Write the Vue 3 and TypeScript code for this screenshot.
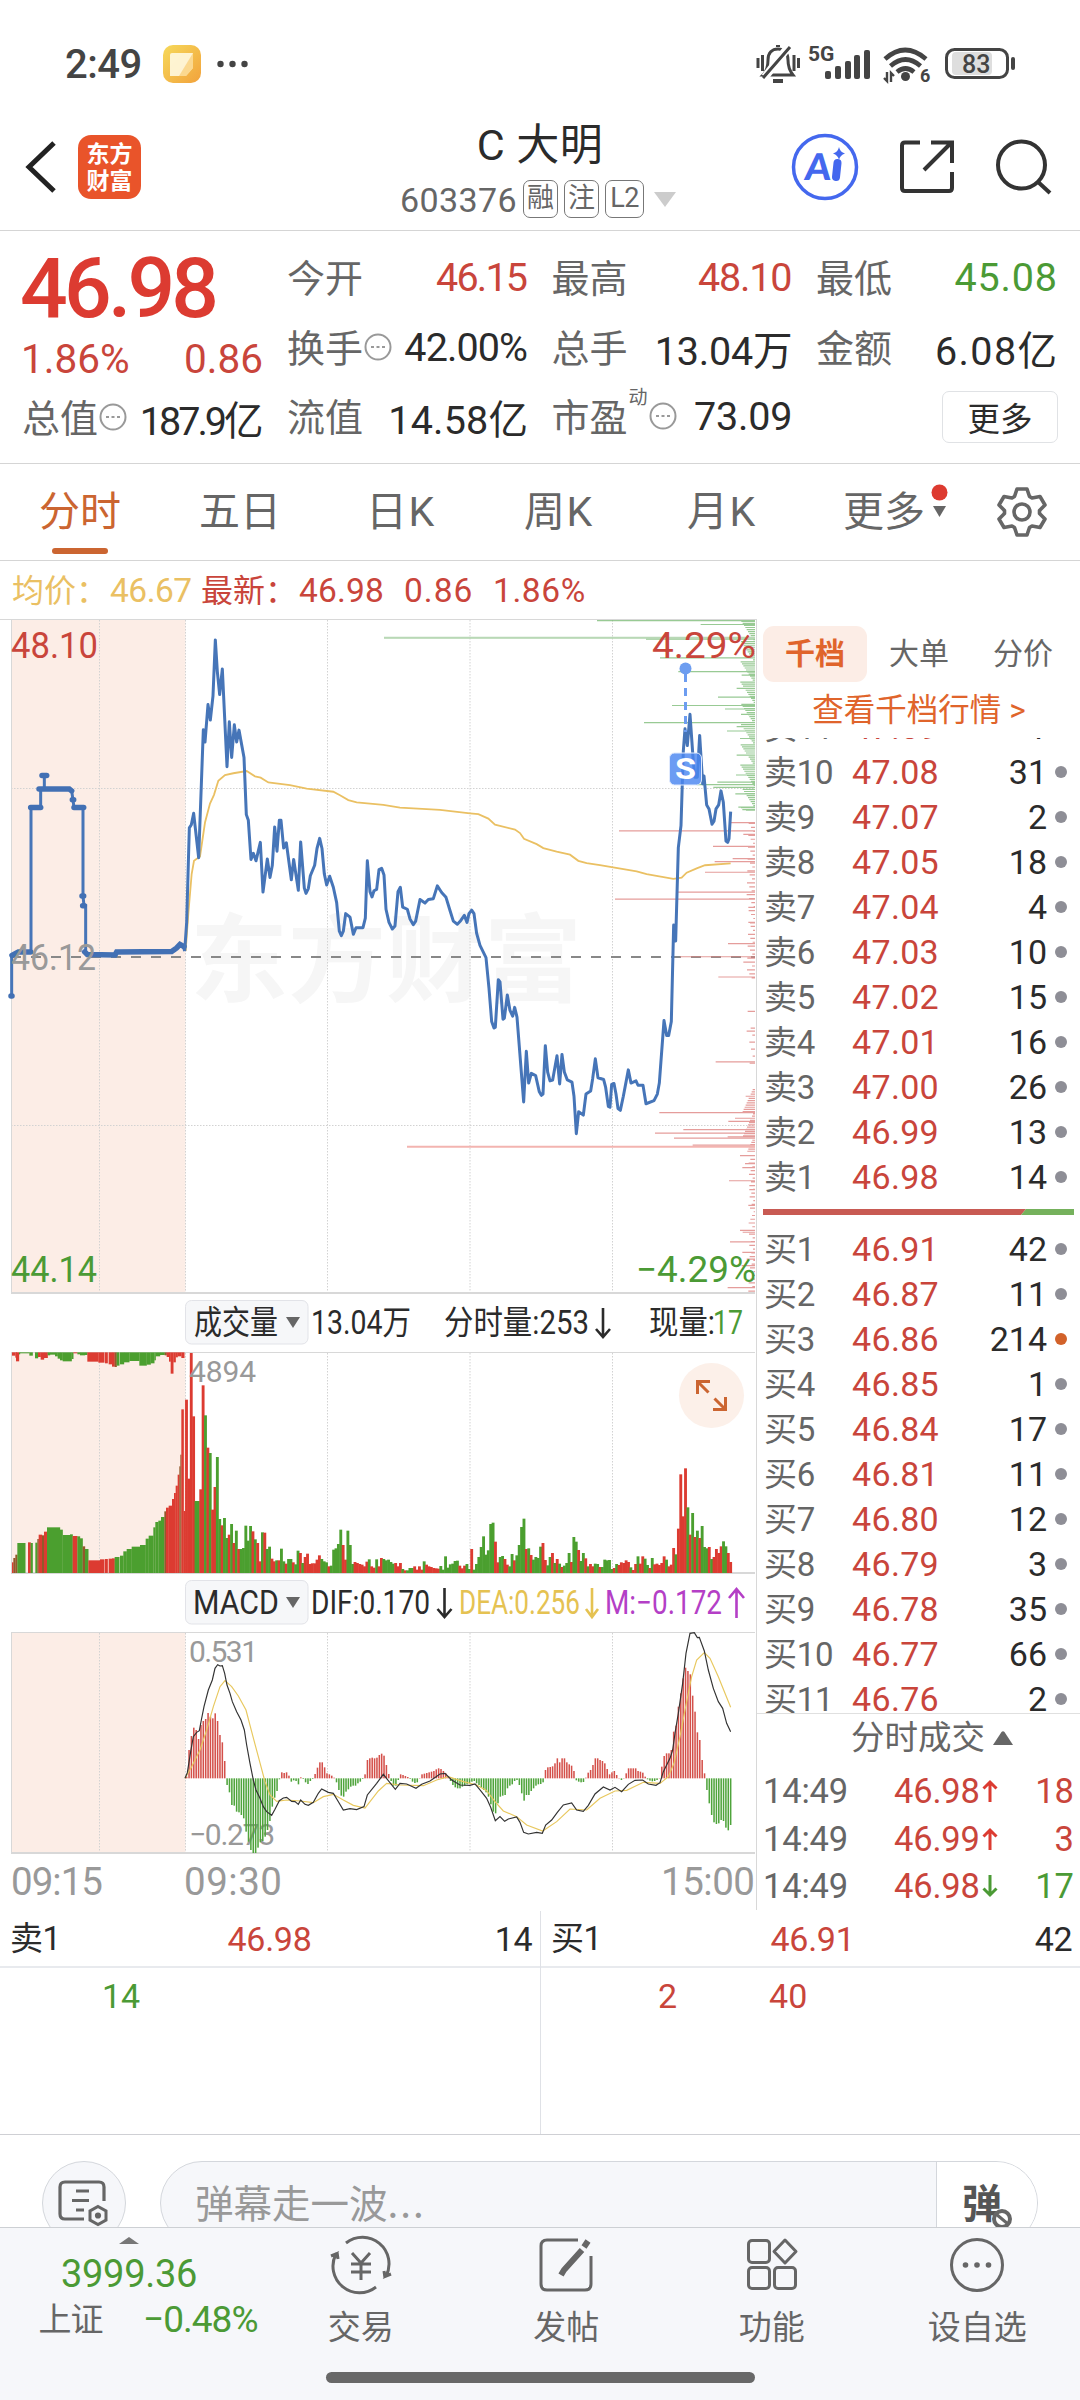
<script setup lang="ts">
type Tone = 'red' | 'green' | 'dark'
interface Stat { label: string; value: string; tone: Tone; ls: number; more?: boolean; sup?: string }
interface Level { name: string; price: string; vol: number; hot?: boolean }
interface Bar { x: number; h: number; up: boolean }

const stats: Stat[] = [
  { label: '今开', value: '46.15', tone: 'red', ls: -1.8 },
  { label: '最高', value: '48.10', tone: 'red', ls: -1.2 },
  { label: '最低', value: '45.08', tone: 'green', ls: 0.8 },
  { label: '换手', value: '42.00%', tone: 'dark', ls: -0.9, more: true },
  { label: '总手', value: '13.04万', tone: 'dark', ls: -0.2 },
  { label: '金额', value: '6.08亿', tone: 'dark', ls: 1.4 },
  { label: '流值', value: '14.58亿', tone: 'dark', ls: 0.2 },
  { label: '市盈', value: '73.09', tone: 'dark', ls: -0.2, more: true, sup: '动' },
]
const tabs = ['五日', '日K', '周K', '月K']

const mk = (side: string, from: number, rows: [string, number][], step: number): Level[] =>
  rows.map(([price, vol], i) => ({ name: side + (from + i * step), price, vol, hot: vol > 200 }))
const asks = mk('卖', 11, [['47.09', 1], ['47.08', 31], ['47.07', 2], ['47.05', 18], ['47.04', 4], ['47.03', 10], ['47.02', 15], ['47.01', 16], ['47.00', 26], ['46.99', 13], ['46.98', 14]], -1)
const bids = mk('买', 1, [['46.91', 42], ['46.87', 11], ['46.86', 214], ['46.85', 1], ['46.84', 17], ['46.81', 11], ['46.80', 12], ['46.79', 3], ['46.78', 35], ['46.77', 66], ['46.76', 2]], 1)
const trades = [
  { price: '46.98', up: true, vol: 18 },
  { price: '46.99', up: true, vol: 3 },
  { price: '46.98', up: false, vol: 17 },
]

/* Chart plots use a fine grid: 3 units per pixel across. */
const join = (a: string, b: string): string =>
  a + ' ' + b.split(' ').map(p => { const [x, y] = p.split(','); return `${+x + 1110},${y}` }).join(' ')

const auction = '35,877 35,790 40,785 50,782 55,777 93,777 93,449 122,449 122,407 133,407 133,377 133,407 208,407 215,411 219,432 222,449 249,449 249,650 252,672 257,672 257,777 262,783 345,784 350,777 515,776 530,768 540,760 550,765 554,775'
const auctionFlat = ['33,877 36,877', '36,785 55,777 92,777', '92,449 122,449', '117,407 208,407 215,411', '126,376 140,376', '217,431 221,431', '222,449 251,449', '246,650 251,650', '248,672 253,672', '254,777 262,783 345,784 350,777 515,776 530,768 540,760 552,765']
const price = join(
  '554,775 560,710 568,495 574,488 581,462 596,563 610,272 615,300 624,215 631,250 639,195 646,68 652,140 659,192 667,134 674,245 681,356 688,254 695,335 703,261 710,300 717,273 732,335 739,465 745,478 753,567 760,553 768,570 781,528 789,641 802,566 810,608 817,580 824,493 831,548 838,478 843,478 851,541 859,529 874,613 881,567 895,637 902,527 913,632 918,644 925,633 931,604 944,580 951,542 959,519 966,542 973,600 980,625 989,605 1000,630 1010,665 1018,730 1024,740 1030,730 1037,690 1050,698 1060,737 1068,722 1089,722 1096,700 1102,570 1110,640',
  '6,652 12,638 20,635 27,590 35,587 42,602 48,680 57,710 67,725 75,718 84,640 91,630 98,675 112,680 120,702 130,715 137,707 150,658 165,666 175,658 190,656 202,627 215,642 228,653 240,683 250,707 262,714 272,706 283,694 291,710 297,690 305,682 312,690 320,735 330,762 348,790 357,860 365,935 372,950 376,948 385,840 390,845 399,930 403,928 412,875 420,910 428,923 434,903 441,925 461,1118 469,1003 476,1075 484,1053 497,1058 508,1095 514,1103 519,1100 526,990 533,1050 540,1070 548,1068 561,1013 569,1077 576,1010 583,1050 592,1068 606,1073 612,1105 619,1190 626,1140 640,1148 648,1100 662,1093 668,1065 676,1020 684,1063 701,1067 707,1085 715,1128 720,1130 725,1078 732,1076 738,1100 744,1133 751,1137 760,1105 775,1045 783,1075 798,1070 804,1080 819,1080 828,1122 852,1115 862,1100 868,1075 882,933 890,967 896,967 904,935 911,716 917,752 925,540 933,490 940,320 945,270 952,308 960,237 970,345 975,380 982,380 989,285 998,395 1002,377 1010,443 1017,452 1026,487 1032,480 1038,452 1046,443 1053,411 1060,437 1068,525 1073,528 1077,520 1082,458')
const average = join(
  '557,775 565,690 575,600 582,570 600,560 615,483 630,440 642,420 655,388 675,375 700,371 740,366 765,378 782,381 805,392 870,398 920,406 1000,413 1020,421 1045,432 1070,437 1110,440',
  '40,443 90,449 210,454 300,462 325,464 355,474 375,488 435,499 450,507 462,520 500,532 520,541 560,549 600,556 625,570 650,575 690,580 800,594 830,600 910,611 935,608 950,597 980,587 1005,580 1082,576')
const dif = join(
  '555,625 562,608 572,545 580,500 590,487 598,482 604,450 612,410 625,360 637,330 645,295 653,284 660,288 667,287 674,310 681,345 690,370 697,395 710,425 723,450 733,480 740,525 750,580 760,630 768,660 780,685 790,710 800,725 815,736 825,718 838,692 850,684 860,682 875,694 885,695 895,703 902,690 915,703 925,706 940,697 955,670 965,657 985,667 1000,670 1012,690 1030,720 1050,716 1070,719 1092,710 1102,675',
  '20,640 40,613 55,632 76,658 90,640 110,642 138,655 155,643 180,633 210,612 225,610 245,630 270,645 300,646 315,642 330,660 350,685 362,712 376,752 390,740 404,754 415,747 440,741 450,757 461,787 475,792 500,787 517,790 527,765 545,750 562,727 580,705 605,699 620,720 640,724 655,706 675,672 700,651 720,660 735,652 755,665 775,643 795,631 818,630 835,642 858,646 870,638 880,605 900,565 908,540 915,490 925,430 938,340 948,250 960,190 973,188 982,203 988,202 1003,243 1015,300 1030,355 1045,395 1058,415 1070,460 1082,485')
const dea = join(
  '555,625 575,590 600,540 620,480 640,410 660,350 675,332 695,350 715,378 738,420 755,485 775,560 795,635 810,675 830,694 860,690 900,693 940,698 970,680 1000,673 1030,690 1060,706 1095,714',
  '25,663 50,640 90,645 160,647 200,630 235,620 280,635 320,645 350,662 375,695 400,723 440,740 470,765 518,783 560,755 600,717 650,720 690,685 735,663 770,661 820,637 870,640 895,620 912,580 930,500 945,420 965,320 980,270 1003,248 1020,265 1045,320 1065,370 1082,412')

const spread = (src: string, x0: number, x1: number): Bar[] => {
  const v = src.split(' ')
  return v.map((s, i) => ({ x: x0 + ((x1 - x0) * i) / (v.length - 1), h: parseInt(s, 10), up: s.endsWith('r') }))
}
const volume: Bar[] = [
  ...spread('520r 283r 660r 470r 216g 216g 251r 563r 473g 376r 360g 190r 258r 348g 162g 143r 165g 105g 115r 147g 90r 127g 72r 72g 75g 142g 97g 141g 125r 101g 90r 35r 122g 121r 72g 79g 43r 35r 38g 38r 73g 35g 28r 42g 42g 32r 26g 67g 60r 30g 48r 58r 27r 29r 29r 40r 53r 42g 35g 32g 20r 22g 70g 74g 87g 130g 84r 40r 127g 84g 27g 33r 30r 27r 25r 20r 34r 41g 20r 16r', 559.5, 1122),
  ...spread('41g 20r 45r 42g 38g 40g 33g 28g 30r 20r 30r 12g 8r 8g 15g 15g 20r 10r 20r 10r 35g 25r 20r 18r 15r 14r 13r 21g 10g 50g 16g 26g 28g 36g 37g 22r 14r 22r 27g 12g 72r 10g 27g 48g 78g 110g 55g 68g 147g 151g 94r 32r 48g 51g 42r 25r 20g 57g 38r 53g 84g 138g 163g 72r 74g 54r 40g 48g 45g 79g 90r 39r 23g 48g 60r 30g 42r 28g 18r 22g 30g 60g 33r 108g 94g 69r 36g 60g 44r 20g 27r 20r 28g 27g 18r 18g 40g 38g 39g 12g 15r 27g 24r 32r 30r 38r 33r 17g 9r 27r 50g 28r 50r 43g 24g 15r 45g 26r 28r 24r 30r 50r 40g 20r 25r 75r 56g 133r 296r 170r 314r 197g 115r 180g 108r 127g 105r 141g 78g 74g 78r 42g 48r 72r 60r 80r 95g 80g 60r 33r', 1130, 2192),
]
const macd: Bar[] = [
  ...spread('5 85 127 152 145 118 160 172 178 196 185 180 195 172 130 108 52 -20 -42 -80 -82 -100 -102 -110 -120 -160 -190 -215 -224 -224 -208 -192 -188 -175 -155 -128 -85 -58 -38 -3 18 16 18 8 -10 -6 -8 -18 3 -2 -12 -17 -8 -2 13 32 48 48 33 15 12 8 2 -12 -35 -52 -55 -40 -33 -25 -22 -22 -15 -10 -2 12 55 60 62 60 62 70', 560, 1138),
  ...spread('74 68 40 13 -8 -22 -22 -5 12 10 7 4 -2 -10 -14 -12 1 12 14 16 18 20 22 27 30 28 22 15 5 -8 -20 -27 -30 -30 -25 -22 -18 -15 -10 -8 -15 -20 -28 -35 -42 -55 -78 -100 -105 -75 -55 -52 -50 -30 -22 -18 -8 -5 -20 -45 -67 -50 -50 -38 -30 -22 -18 -17 -12 25 33 34 36 45 60 48 60 60 48 42 38 22 -6 -10 -12 -11 2 17 25 40 60 60 55 52 45 28 12 18 22 10 1 -5 1 15 30 30 30 30 22 20 17 5 -3 -7 -9 -8 -5 1 35 67 75 75 85 140 158 215 255 300 332 322 312 248 200 138 115 55 15 -35 -75 -110 -132 -137 -135 -125 -128 -148 -156 -140', 1145, 2192),
].map(b => ({ ...b, up: b.h > 0 }))

/* Opening auction: [x0, x1, height, colour] */
type Seg = [number, number, number, 'r' | 'g' | 'm']
const unmatched: Seg[] = [
  [36, 46, 10, 'r'], [46, 50, 16, 'r'], [48, 57, 27, 'r'], [57, 60, 6, 'g'], [60, 88, 3, 'g'], [88, 98, 10, 'g'], [105, 114, 18, 'g'], [114, 122, 14, 'r'], [122, 132, 22, 'r'], [132, 143, 17, 'r'], [143, 150, 9, 'g'], [150, 165, 7, 'g'], [165, 173, 12, 'g'], [173, 180, 19, 'g'], [180, 188, 24, 'g'], [188, 215, 27, 'g'], [215, 220, 20, 'g'], [220, 232, 3, 'r'], [232, 240, 6, 'g'], [240, 255, 9, 'g'], [255, 262, 8, 'g'], [262, 295, 28, 'r'], [295, 313, 31, 'r'], [315, 323, 33, 'r'], [326, 336, 36, 'r'], [336, 344, 43, 'r'], [344, 350, 44, 'm'], [350, 358, 40, 'g'], [360, 372, 36, 'g'], [372, 388, 30, 'g'], [388, 418, 26, 'g'], [418, 440, 40, 'g'], [440, 452, 37, 'g'], [452, 463, 33, 'g'], [463, 467, 24, 'g'], [467, 480, 12, 'g'], [480, 494, 8, 'g'], [494, 500, 9, 'm'], [500, 507, 14, 'r'], [507, 512, 28, 'r'], [512, 520, 64, 'r'], [520, 527, 30, 'r'], [527, 533, 15, 'r'], [533, 544, 12, 'r'], [544, 553, 17, 'r'],
]
const matched: Seg[] = [
  [36, 40, 32, 'r'], [40, 46, 45, 'm'], [46, 52, 55, 'm'], [52, 76, 90, 'g'], [84, 92, 92, 'r'], [92, 98, 90, 'g'], [106, 112, 91, 'g'], [112, 116, 102, 'm'], [116, 126, 115, 'r'], [126, 132, 113, 'm'], [132, 141, 124, 'r'], [141, 180, 137, 'g'], [180, 188, 130, 'g'], [188, 210, 114, 'g'], [210, 218, 116, 'g'], [218, 232, 111, 'r'], [232, 240, 110, 'g'], [240, 248, 104, 'g'], [248, 255, 80, 'm'], [255, 265, 72, 'g'], [265, 300, 38, 'r'], [300, 313, 41, 'r'], [315, 323, 42, 'r'], [326, 336, 43, 'r'], [336, 344, 44, 'r'], [344, 358, 48, 'g'], [360, 370, 52, 'g'], [370, 380, 65, 'g'], [380, 395, 72, 'g'], [395, 420, 79, 'g'], [420, 437, 84, 'g'], [437, 446, 103, 'g'], [446, 460, 112, 'g'], [460, 466, 137, 'g'], [466, 475, 153, 'g'], [475, 483, 157, 'g'], [483, 493, 168, 'g'], [493, 498, 185, 'm'], [498, 506, 196, 'r'], [506, 516, 202, 'r'], [516, 522, 222, 'r'], [522, 527, 240, 'r'], [527, 533, 262, 'r'], [533, 538, 295, 'r'], [538, 541, 320, 'm'], [541, 544, 355, 'm'], [544, 551, 491, 'r'], [551, 556, 186, 'r'],
]
const hue = { r: '#dc3b31', g: '#4b9f2f', m: '#93592b' }

/* Order depth drawn from the right edge: y, x0 */
const asksDepth = '24,681 33,992 63,42 66,828 109,870 140,925 148,1115 178,1100 198,1044 217,906 225,1065 237,1113 256,822 265,1100 275,1071 292,1110 330,1100 375,1098 391,1042 397,980 403,1030 418,1096 448,1105 455,1128'
const bidsDepth = '483,1080 502,747 510,1120 537,1029 565,1088 572,1034 596,1005 641,920 657,735 676,1135 711,1140 758,1074 788,930 800,1120 834,1045 912,1133 957,1130 1027,1037 1105,1127 1142,868 1155,1095 1162,1075 1181,940 1189,855 1197,1073 1200,912 1216,968 1240,1110 1258,1125 1267,1117 1297,1077 1317,1138 1353,1135 1410,1110 1414,1118 1436,1080 1460,1117 1475,1130 1490,1115 1540,1073 1548,1135'
const depth = (s: string) => s.split(' ').map(p => { const [y, x] = p.split(',').map(Number); return `M${x + 1110} ${y}H2265` }).join('')
const ticks = (from: number, to: number, step: number, max: number) => {
  let d = ''
  for (let y = from, k = 1; y < to; y += step, k++) d += `M${2265 - 4 - ((k * 37) % max)} ${y}H2265`
  return d
}
const asksPath = depth(asksDepth) + ticks(26, 456, 4.6, 41)
const bidsPath = depth(bidsDepth) + ticks(485, 840, 9, 22) + ticks(950, 1040, 16, 14) + ticks(1090, 1235, 5, 34) + ticks(1240, 1545, 8.5, 16)
const gridX = [99.5, 185.5, 327.5, 470, 612.5]
const stretch = 'spacingAndGlyphs'
</script>

<template>
  <div class="screen">
    <div class="status">
      <span class="clock">2:49</span>
      <svg class="app" width="38" height="38" viewBox="0 0 38 38"><defs><linearGradient id="note" x1="0" y1="0" x2="1" y2="1"><stop offset="0" stop-color="#f6d95a" /><stop offset="1" stop-color="#f2a23c" /></linearGradient></defs><rect width="38" height="38" rx="10" fill="url(#note)" /><path d="M9 8h21v15l-7 8H7V10q0-2 2-2z" fill="#fff8e0" opacity=".9" /><path d="M30 8v15l-7 8h-7z" fill="#f9cd74" opacity=".7" /></svg>
      <svg width="34" height="10" viewBox="0 0 34 10" fill="#444"><circle cx="4.500" cy="5" r="3.200" /><circle cx="16.500" cy="5" r="3.200" /><circle cx="28.500" cy="5" r="3.200" /></svg>
      <svg class="sys" width="264" height="44" viewBox="755 42 264 44" fill="none" stroke="#444">
        <path d="M763 75c4-4 5-8 5-15 0-7 4-11 10-11s10 4 10 11c0 6 1 10 5 15z" stroke-width="3" /><path d="M778 47v-2M773 81h10" stroke-width="4" /><path d="M789 46l-24 31" stroke="#fff" stroke-width="8" /><path d="M790 47l-27 31M758 58v10M762.5 55v16M794 55v16M798.500 58v10" stroke-width="3" />
        <g fill="#444" stroke="none"><text x="808" y="61" class="g5">5G</text><rect x="825" y="71" width="6" height="8" rx="2" /><rect x="835" y="66" width="6" height="13" rx="2" /><rect x="845" y="61" width="6" height="18" rx="2" /><rect x="854" y="55" width="6" height="24" rx="2" /><rect x="864" y="50" width="6" height="29" rx="2" /><circle cx="905.500" cy="76.500" r="4.500" /><text x="920" y="82" class="g6">6</text></g>
        <path d="M885 59q20-18 41 0M890.500 66q15-13 30 0M897 72q8.500-7 17 0" stroke-width="4.600" /><path d="M887 72v9l-3-3M891 82v-9l3 3" stroke-width="2.400" />
        <rect x="952" y="52" width="40" height="23" rx="4" fill="#dedede" stroke="none" /><rect x="946.500" y="49.500" width="61" height="28" rx="8" stroke-width="3" /><path d="M1013 59v9" stroke-width="4" stroke-linecap="round" /><text x="962" y="73" class="bat">83</text>
      </svg>
    </div>

    <header class="head">
      <svg class="back" width="34" height="56" viewBox="0 0 34 56"><path d="M30 5L5 29l25 24" fill="none" stroke="#222" stroke-width="5" /></svg>
      <div class="logo"><span>东方</span><span>财富</span></div>
      <div class="title">
        <div class="name">C 大明</div>
        <div class="code"><span class="num">603376</span><i>融</i><i>注</i><i class="l2">L2</i><svg width="22" height="15" viewBox="0 0 22 15"><path d="M0 0h22L11 15z" fill="#ccc" /></svg></div>
      </div>
      <svg class="tools" width="264" height="72" viewBox="791 131 264 72" fill="none" stroke="#333" stroke-width="4">
        <circle cx="826" cy="167" r="31.500" stroke="#4468ee" stroke-width="3.500" /><text transform="translate(805 180) skewX(-5)" class="ai">A</text><path d="M838.500 163l-1.500 14" stroke="#4468ee" stroke-width="8" stroke-linecap="round" /><path d="M840 147q1 5 6 6.500-5 1.500-6 6.500-1-5-6-6.500 5-1.500 6-6.500z" fill="#4468ee" stroke="none" />
        <path d="M921 142.500h-15q-3 0-3 3V188q0 3 3 3h44q3 0 3-3v-16M932 142.500h21V163M952 143l-27 27" /><circle cx="1022.500" cy="165" r="23.500" /><path d="M1038 181l13 12" />
      </svg>
    </header>

    <section class="quote">
      <div class="left">
        <div class="last">46.98</div>
        <div class="chg red"><span>1.86%</span><span>0.86</span></div>
        <div class="cell c0"><span class="lb">总值</span><svg class="dots" viewBox="0 0 28 28"><circle cx="14" cy="14" r="12.500" /><path d="M7 14h3m2.500 0h3m2.500 0h3" /></svg><b class="v" :style="{ letterSpacing: '-3px', marginRight: '1.5px' }">187.9亿</b></div>
      </div>
      <div class="grid">
        <div v-for="s in stats" :key="s.label" class="cell">
          <span class="lb">{{ s.label }}</span><sup v-if="s.sup">{{ s.sup }}</sup>
          <svg v-if="s.more" class="dots" viewBox="0 0 28 28"><circle cx="14" cy="14" r="12.500" /><path d="M7 14h3m2.500 0h3m2.500 0h3" /></svg>
          <b class="v" :class="s.tone" :style="{ letterSpacing: s.ls + 'px', marginRight: -s.ls - 1 + 'px' }">{{ s.value }}</b>
        </div>
        <div class="cell"><button class="morebtn">更多</button></div>
      </div>
    </section>

    <nav class="tabs">
      <span class="on">分时</span><span v-for="t in tabs" :key="t">{{ t }}</span>
      <span class="tmore">更多<svg width="17" height="34" viewBox="0 0 17 34"><circle cx="8.500" cy="8.500" r="8" fill="#dd3a30" /><path d="M2 22h13l-6.500 11z" fill="#666" /></svg></span>
      <svg class="gear" width="52" height="52" viewBox="-26 -26 52 52" fill="none" stroke="#666" stroke-width="3.600" stroke-linejoin="round"><path d="M-5-23H5L7.500-15.500 10-14 18-15.500 23-7 17.500-1.500V1.500L23 7 18 15.500 10 14 7.500 15.500 5 23H-5L-7.500 15.500-10 14-18 15.500-23 7-17.500 1.500V-1.500L-23-7-18-15.500-10-14-7.500-15.500z" /><circle r="8" /></svg>
    </nav>

    <div class="legend"><span class="y">均价：</span><span class="y n1">46.67</span><span class="red n2">最新：</span><span class="red n3">46.98</span><span class="red n4">0.86</span><span class="red n5">1.86%</span></div>

    <main class="body">
      <svg class="chart" width="757" height="1291" viewBox="0 619 757 1291">
        <rect x="11" y="620" width="174.500" height="673" fill="#fcede6" /><rect x="11" y="1352" width="174.500" height="221" fill="#fcede6" /><rect x="11" y="1632" width="174.500" height="221" fill="#fcede6" />
        <text class="wm" x="190" y="994" textLength="392" :lengthAdjust="stretch">东方财富</text>
        <g stroke="#d2d2d2" stroke-dasharray="1.500 1.500"><path v-for="x in gridX" :key="x" :d="`M${x} 620V1293M${x} 1353V1572M${x} 1633V1852`" /><path d="M11 788.500H755M11 1125.500H755" /></g>
        <path d="M11 957H755" stroke="#888" stroke-width="2" stroke-dasharray="10 10" />
        <g fill="none" stroke="#d8d8d8"><path d="M0 619.500H757M756.500 620V1910M11.500 620V1293M11.500 1352V1573M11.500 1632V1853M11 1352.500H755M11 1632.500H755" /><path d="M11 1293H755M11 1573H755M11 1853H755" stroke-width="2" /></g>

        <g transform="translate(0 610) scale(.33333 .44005)" fill="none">
          <path :d="asksPath" stroke="#7fbd7a" stroke-width="1.200" class="ns" opacity=".8" /><path d="M1152 63H2265" stroke="#b9d8b6" stroke-width="2" class="ns" />
          <path :d="bidsPath" stroke="#df8583" stroke-width="1.200" class="ns" opacity=".8" /><path d="M1221 1220H2265" stroke="#f3b4b0" stroke-width="2" class="ns" />
          <polyline :points="average" stroke="#eac063" stroke-width="1.800" class="ns" />
          <polyline :points="auction" stroke="#4675b8" stroke-width="3" class="ns" />
          <polyline v-for="p in auctionFlat" :key="p" :points="p" stroke="#4270b4" stroke-width="5.500" class="ns" stroke-linecap="round" />
          <polyline :points="price" stroke="#4675b8" stroke-width="3" class="ns" stroke-linejoin="round" />
        </g>
        <path d="M685.500 674V732" stroke="#6d9df0" stroke-width="3" stroke-dasharray="8 6" /><circle cx="685.500" cy="668.500" r="6" fill="#6d9df0" />
        <rect x="669.500" y="753" width="32" height="32" rx="5" fill="#4a86f0" fill-opacity=".82" stroke="#dfe9fd" /><text x="675" y="779" class="s" textLength="21" :lengthAdjust="stretch">S</text>
        <g class="ax"><text x="11" y="658" fill="#c9453b" textLength="87" :lengthAdjust="stretch">48.10</text><text x="11" y="970" fill="#999" textLength="85" :lengthAdjust="stretch">46.12</text><text x="11" y="1282" fill="#4b9a35" textLength="86" :lengthAdjust="stretch">44.14</text><text x="652" y="658" fill="#c9453b" textLength="104" :lengthAdjust="stretch">4.29%</text><text x="636" y="1282" fill="#4b9a35" textLength="120" :lengthAdjust="stretch">−4.29%</text></g>

        <g v-for="y in [1300, 1580]" :key="y"><rect x="185.500" :y="y + 0.5" width="122.500" height="43.500" rx="6" fill="#f6f7f9" stroke="#e2e3e8" /><path :d="`M286 ${y + 17}h14l-7 11z`" fill="#666" /></g>
        <g class="hd" fill="#2b2b2b">
          <text x="194" y="1334" textLength="84" :lengthAdjust="stretch">成交量</text><text x="311" y="1334" textLength="100" :lengthAdjust="stretch">13.04万</text><text x="444" y="1334" textLength="145" :lengthAdjust="stretch">分时量:253</text><text x="649" y="1334" textLength="66" :lengthAdjust="stretch">现量:</text><text x="713" y="1334" textLength="30" :lengthAdjust="stretch" class="now">17</text>
          <text x="193" y="1614" textLength="86" :lengthAdjust="stretch">MACD</text><text x="311" y="1614" textLength="119" :lengthAdjust="stretch">DIF:0.170</text><text x="459" y="1614" textLength="121" :lengthAdjust="stretch" fill="#e5c252">DEA:0.256</text><text x="605" y="1614" textLength="117" :lengthAdjust="stretch" fill="#b43fc6">M:−0.172</text>
        </g>
        <g fill="none" stroke-width="2.600"><path d="M603 1308v29m-7-8l7 8 7-8M444.500 1588v29m-7-8l7 8 7-8" stroke="#2b2b2b" /><path d="M592 1588v29m-6-8l6 8 6-8" stroke="#e5c252" /><path d="M736.500 1618v-29m-7.500 9l7.500-9 7.500 9" stroke="#b43fc6" /></g>

        <g transform="translate(0 1290) scale(.33333)">
          <rect v-for="(s, i) in unmatched" :key="'u' + i" :x="s[0]" y="187" :width="s[1] - s[0] + 0.5" :height="s[2]" :fill="hue[s[3]]" />
          <rect v-for="(s, i) in matched" :key="'m' + i" :x="s[0]" :y="849 - s[2]" :width="s[1] - s[0] + 0.5" :height="s[2]" :fill="hue[s[3]]" />
          <rect v-for="(b, i) in volume" :key="'v' + i" :x="b.x - 4.3" :y="849 - b.h" width="8.600" :height="b.h" :fill="b.up ? '#dc3b31' : '#4b9f2f'" />
        </g>
        <g class="sm"><text x="189" y="1382" textLength="67">4894</text><text x="189" y="1662" textLength="69">0.531</text><text x="189" y="1845" textLength="86">−0.273</text></g>
        <g transform="translate(0 1570) scale(.33333)" fill="none">
          <rect v-for="(b, i) in macd" :key="'d' + i" :x="b.x - 2.3" :y="b.up ? 625 - b.h : 625" width="4.600" :height="Math.abs(b.h)" :fill="b.up ? '#d4504a' : '#4fa43c'" />
          <polyline :points="dea" stroke="#e8c85e" stroke-width="3.500" /><polyline :points="dif" stroke="#333" stroke-width="3.500" />
        </g>
        <g class="sm"><text x="189" y="1845" textLength="86" opacity=".7" aria-hidden="true"></text></g>
        <g class="tm"><text x="11" y="1895" textLength="92">09:15</text><text x="184" y="1895" textLength="98">09:30</text><text x="661" y="1895" textLength="94">15:00</text></g>
        <circle cx="711.500" cy="1395.500" r="32.500" fill="#fcf0e9" /><path d="M708.500 1392.500l-10-10M697.500 1394v-12.500H710M714.500 1398.500l10 10M713 1409.500h12.500V1397" fill="none" stroke="#cb6531" stroke-width="3" />
      </svg>

      <aside class="book">
        <div class="btabs"><span class="on">千档</span><span>大单</span><span>分价</span></div>
        <div class="link">查看千档行情 &gt;</div>
        <div class="asks"><div v-for="l in asks" :key="l.name" class="lv"><span class="ln">{{ l.name }}</span><span class="lp">{{ l.price }}</span><span class="lq">{{ l.vol }}</span><i /></div></div>
        <svg class="ratio" width="311" height="6" viewBox="0 0 311 6"><path d="M0 0H263L258 6H0z" fill="#c85a53" /><path d="M263 0H311V6H258z" fill="#75b15c" /></svg>
        <div class="bids"><div v-for="l in bids" :key="l.name" class="lv"><span class="ln">{{ l.name }}</span><span class="lp">{{ l.price }}</span><span class="lq">{{ l.vol }}</span><i :class="{ hot: l.hot }" /></div></div>
        <div class="th">分时成交<svg width="20" height="14" viewBox="0 0 20 14"><path d="M0 14L8.500 1q1.500-1.500 3 0L20 14z" fill="#666" /></svg></div>
        <div v-for="(t, i) in trades" :key="i" class="tr"><span class="tt">14:49</span><span class="tp">{{ t.price }}</span>
          <svg width="16" height="24" viewBox="0 0 16 24" fill="none" stroke-width="3"><path v-if="t.up" d="M8 23V3M1.500 9.500L8 3l6.500 6.500" stroke="#dc3b31" /><path v-else d="M8 1v20M1.500 14.500L8 21l6.500-6.500" stroke="#4b9a35" /></svg>
          <span class="tq" :class="t.up ? 'red' : 'green'">{{ t.vol }}</span></div>
      </aside>
    </main>

    <section class="queue">
      <div class="half"><div class="qh"><span>卖1</span><b class="red">46.98</b><span class="r">14</span></div><div class="ql green"><span class="q1">14</span></div></div>
      <div class="half"><div class="qh"><span>买1</span><b class="red">46.91</b><span class="r">42</span></div><div class="ql red"><span class="q2">2</span><span class="q3">40</span></div></div>
    </section>

    <section class="danmu">
      <div class="round"><svg width="54" height="50" viewBox="0 0 54 50" fill="none" stroke="#666" stroke-width="3.200"><path d="M47 22V8q0-5-5-5H8Q3 3 3 8v27q0 5 5 5h19M19 12h13M15 21.500h17M19 31h8" /><path d="M41 27.500l8 4.500v9l-8 4.500-8-4.500v-9z" fill="#f6f7fa" stroke-width="3" /><circle cx="41" cy="36.500" r="1.500" /></svg></div>
      <div class="input"><span>弹幕走一波<em>...</em></span><div class="dan">弹<svg width="24" height="24" viewBox="0 0 24 24"><circle cx="12" cy="12" r="8" fill="#fff" stroke="#666" stroke-width="4" /><path d="M6 7l12 10" stroke="#666" stroke-width="3" /></svg></div></div>
    </section>

    <footer class="bar">
      <div class="index"><svg width="20" height="7" viewBox="0 0 20 7"><path d="M0 7L10 0l10 7z" fill="#777" /></svg><div class="pt">3999.36</div><div class="ix"><span>上证</span><span class="green">−0.48%</span></div></div>
      <div class="act"><svg width="62" height="58" viewBox="-31 -29 62 58" fill="none" stroke="#666" stroke-width="3"><path d="M-15-22A26.500 26.500 0 0 1 25 11l5-2M15 22A26.500 26.500 0 0 1-25-11l-5 2M24 13l-1-7M-24-13l1 7M-9-12L0-2 9-12M0-2V15M-10-1H10M-10 7H10" /></svg>交易</div>
      <div class="act"><svg width="62" height="58" viewBox="-31 -29 62 58" fill="none" stroke="#666" stroke-width="3"><path d="M12-25H-19q-6 0-6 6V19q0 6 6 6H19q6 0 6-6V-9" /><path d="M22-24L18-18M16-15L-2 5l-3 5" stroke-width="6" /></svg>发帖</div>
      <div class="act"><svg width="62" height="58" viewBox="-31 -29 62 58" fill="none" stroke="#666" stroke-width="3"><rect x="-23.500" y="-24.500" width="21" height="22" rx="3.500" /><rect x="-23.500" y="2.500" width="21" height="21" rx="3.500" /><rect x="2.500" y="2.500" width="21" height="21" rx="3.500" /><path d="M13-25L24-13.500 13-2 2-13.500z" stroke-linejoin="round" /></svg>功能</div>
      <div class="act"><svg width="62" height="58" viewBox="-31 -29 62 58" fill="none" stroke="#666" stroke-width="3"><circle r="25.500" /><g fill="#666" stroke="none"><circle cx="-11.500" r="2.800" /><circle r="2.800" /><circle cx="11.500" r="2.800" /></g></svg>设自选</div>
      <div class="home" />
    </footer>
  </div>
</template>

<style>
body { margin: 0; background: #fff; }
</style>
<style scoped>
.screen { width: 1080px; height: 2400px; overflow: hidden; background: #fff; color: #2b2b2b; font-family: Roboto, "Noto Sans CJK SC", sans-serif; display: flex; flex-direction: column; white-space: nowrap; }
.screen * { box-sizing: border-box; }
.screen > * { flex: none; }
svg { display: block; flex: none; overflow: visible; }
b, i, em { font-weight: 400; font-style: normal; }
.red { color: #c9453b; }
.green { color: #4b9a35; }
.status { height: 108px; padding: 20px 0 0 65px; display: flex; align-items: center; }
.clock { font-size: 40px; line-height: 48px; color: #444; width: 98px; font-weight: 500; letter-spacing: -.5px; padding-top: 1px; }
.app { margin-right: 15px; }
.sys { margin-left: auto; margin-right: 61px; }
.g5 { font: 700 21px Roboto, sans-serif; } .g6 { font: 700 18px Roboto, sans-serif; } .bat { font: 500 25px Roboto, sans-serif; fill: #444; stroke: none; }
.head { height: 123px; border-bottom: 1px solid #d5d5d5; display: flex; }
.back { margin: 30px 0 0 24px; }
.logo { margin: 27px 0 0 20px; width: 63px; height: 64px; border-radius: 13px; background: #e9542a; color: #fff; font: 700 23px/27px "Noto Sans CJK SC", sans-serif; display: flex; flex-direction: column; align-items: center; padding-top: 4px; }
.title { width: 400px; margin-left: 199px; padding-top: 11px; display: flex; flex-direction: column; align-items: center; }
.name { font-size: 43px; line-height: 50px; letter-spacing: .5px; padding-top: 1px; }
.code { margin-left: -4px; display: flex; align-items: center; height: 40px; margin-top: 9px; }
.code .num { font-size: 34px; color: #666; letter-spacing: .4px; padding-top: 1px; }
.code i { height: 38px; width: 35px; border: 1.500px solid #777; border-radius: 7px; font-size: 27px; line-height: 34px; text-align: center; color: #666; margin-left: 6px; }
.code .l2 { width: 39px; letter-spacing: -.5px; }
.code svg { margin-left: 10px; }
.tools { margin: 23px 0 0 50px; }
.ai { font: 900 37px Lato, Roboto, sans-serif; fill: #4468ee; stroke: none; }
.quote { height: 233px; border-bottom: 1px solid #d5d5d5; display: flex; padding: 12px 24px 0; gap: 26px; }
.left { width: 239px; }
.last { height: 89px; font-size: 84px; line-height: 91px; font-weight: 500; color: #dc3b31; letter-spacing: -3.8px; margin-left: -4px; }
.chg { display: flex; justify-content: space-between; font-size: 40.500px; height: 51px; line-height: 55px; margin: 0 -1px 0 -3px; }
.grid { flex: 1; display: grid; grid-template-columns: repeat(3, 239px); column-gap: 25.500px; grid-auto-rows: 69.500px; }
.cell { display: flex; align-items: center; height: 70px; position: relative; }
.lb { font-size: 38px; color: #666; margin: 0 -1px; padding-bottom: 5px; }
.c0 .lb { margin-left: -2px; }
.v { margin-left: auto; font-size: 39.500px; color: #2b2b2b; padding-bottom: 1px; }
.v.red { color: #c9453b; } .v.green { color: #4b9a35; }
.dots { width: 28px; height: 28px; margin-left: 2px; margin-bottom: 2px; fill: none; stroke: #999; stroke-width: 2; }
sup { font-size: 19px; color: #666; align-self: flex-start; margin-top: 4px; line-height: 24px; margin-left: 2px; }
sup + .dots { margin-left: 1px; }
.morebtn { margin-left: auto; margin-right: -2px; width: 116px; height: 52px; border: 1px solid #e0e2e5; border-radius: 7px; background: #fff; font: 32.500px "Noto Sans CJK SC", sans-serif; line-height: 44px; color: #2b2b2b; padding: 0; }
.tabs { height: 97px; border-bottom: 1px solid #d5d5d5; display: flex; align-items: center; padding-left: 39px; font-size: 41px; color: #666; position: relative; }
.tabs span { line-height: 97px; height: 97px; margin-right: 90px; }
.tabs span:nth-child(1) { width: 81px; margin-right: 79px; } .tabs span:nth-child(2) { width: 81px; margin-right: 86px; }
.tabs span:nth-child(3), .tabs span:nth-child(4), .tabs span:nth-child(5) { width: 70px; letter-spacing: 1.500px; }
.tabs span:nth-child(3) { margin-right: 88px; } .tabs span:nth-child(4) { margin-right: 93px; } .tabs span:nth-child(5) { margin-right: 86px; }
.tabs .on { color: #cb6531; position: relative; }
.tabs .on::after { content: ""; position: absolute; left: 13px; bottom: 7px; width: 56px; height: 6px; border-radius: 3px; background: #cb6531; }
.tabs .tmore { display: flex; margin-right: 48px; gap: 6px; }
.tmore svg { margin-top: 20px; }
.legend { height: 58px; line-height: 60px; font-size: 32px; padding-left: 12px; display: flex; }
.legend > span { flex: none; }
.y { color: #eac063; width: 98px; }
.legend .n1 { width: 91px; letter-spacing: -.5px; } .n2 { width: 98px; } .n3 { width: 105px; letter-spacing: .2px; } .n4 { width: 89px; letter-spacing: 1px; } .n5 { letter-spacing: .6px; }
.legend .n1, .legend .n3, .legend .n4, .legend .n5 { font-size: 33.500px; }
.body { height: 1291px; display: flex; }
.ns { vector-effect: non-scaling-stroke; }
.wm { font: 700 96px "Noto Sans CJK SC", sans-serif; fill: #f6f6f6; }
.s { font: 700 29px Roboto, sans-serif; fill: #fff; }
.ax text { font: 36px Roboto, sans-serif; } .hd text { font: 33px Roboto, "Noto Sans CJK SC", sans-serif; }
.now { fill: #4b9a35; }
.sm text { font: 30px Roboto, sans-serif; fill: #999; } .tm text { font: 38.500px Roboto, sans-serif; fill: #999; }
.book { width: 323px; padding-left: 6px; display: flex; flex-direction: column; }
.btabs { display: flex; padding-top: 7px; height: 63px; font-size: 30px; color: #666; }
.btabs span { width: 104px; height: 56px; line-height: 56px; text-align: center; border-radius: 11px; }
.btabs .on { background: #fcede6; color: #e0642b; font-weight: 700; }
.link { height: 56px; line-height: 57px; font-size: 31.500px; color: #e0642b; text-align: center; padding-right: 5px; }
.asks { height: 462px; overflow: hidden; display: flex; flex-direction: column; justify-content: flex-end; }
.lv { height: 45px; flex: none; display: flex; align-items: center; color: #666; line-height: 45px; }
.ln { width: 75px; padding-left: 1px; font-size: 33px; letter-spacing: -.3px; }
.lp { width: 101px; text-align: right; color: #c9453b; font-size: 34px; letter-spacing: .3px; }
.lq { width: 108px; text-align: right; color: #2b2b2b; font-size: 34px; }
.lv i { width: 12px; height: 12px; border-radius: 50%; background: #8e8e96; margin-left: 8px; }
.lv i.hot { background: #d2622a; }
.ratio { margin-top: 9px; }
.bids { margin: 0 0 0 -6px; padding: 12px 0 0 6px; height: 499px; overflow: hidden; border-bottom: 1px solid #e0e0e0; }
.th { height: 53px; display: flex; align-items: center; font-size: 33.500px; line-height: 46px; color: #666; padding: 0 0 4px 88px; gap: 8px; }
.tr { height: 47.500px; display: flex; align-items: center; font-size: 34.500px; color: #666; }
.tr > * { flex: none; }
.tr:nth-last-child(3) { margin-top: 1px; }
.tt { width: 131px; letter-spacing: -.2px; }
.tp { width: 88px; color: #c9453b; letter-spacing: -.2px; }
.tq { width: 76px; text-align: right; }
.queue { height: 225px; border-bottom: 1px solid #cfd0d4; display: flex; padding-top: 1px; }
.half { width: 540px; }
.half + .half { border-left: 1px solid #dfe1e6; }
.qh { height: 57px; border-bottom: 2px solid #e8eaee; display: flex; align-items: center; font-size: 34px; padding: 0 8px 0 10px; justify-content: space-between; line-height: 56px; }
.qh span { width: 90px; letter-spacing: -.5px; font-size: 33px; } .qh .r { text-align: right; font-size: 34px; }
.qh b { letter-spacing: -.3px; margin-left: -3px; }
.half + .half .qh b { margin-left: 2px; }
.ql { height: 56px; display: flex; align-items: center; font-size: 34px; }
.q1 { padding-left: 102px; } .q2 { padding-left: 117px; } .q3 { padding-left: 92px; }
.danmu { height: 92px; overflow: hidden; padding: 26px 42px 0; display: flex; align-items: flex-start; gap: 34px; }
.round { width: 84px; height: 84px; border-radius: 50%; border: 1px solid #d4d7dc; background: #f6f7fa; display: flex; align-items: center; justify-content: center; }
.round svg { margin-top: 1px; }
.input { width: 878px; height: 84px; border: 1px solid #d4d7dc; border-radius: 42px; background: #f6f7fa; overflow: hidden; display: flex; font-size: 38.500px; line-height: 78px; color: #999; padding-left: 34px; font-family: "Noto Sans CJK SC", sans-serif; }
.input > span { flex: 1; }
.input em { letter-spacing: 2px; }
.dan { position: relative; width: 101px; background: #fff; border-left: 1px solid #d4d7dc; color: #555; font-weight: 700; padding-left: 25px; font-size: 40px; }
.dan svg { position: absolute; left: 53px; top: 45px; }
.bar { height: 173px; border-top: 1px solid #cdd0d4; background: #f6f7fa; display: flex; position: relative; color: #666; font-size: 33px; }
.index { width: 258px; padding-top: 9px; display: flex; flex-direction: column; align-items: center; flex: none; }
.pt { font-size: 38px; line-height: 44px; margin-top: 8px; color: #4b9a35; letter-spacing: -.3px; }
.ix { display: flex; width: 257px; justify-content: space-between; padding-left: 38px; line-height: 44px; margin-top: 2px; letter-spacing: -1px; }
.ix .green { font-size: 37px; }
.act { width: 205.500px; display: flex; flex-direction: column; align-items: center; padding-top: 8px; line-height: 68px; flex: none; }
.home { position: absolute; left: 326px; top: 144px; width: 429px; height: 11px; border-radius: 6px; background: #686868; }
</style>
